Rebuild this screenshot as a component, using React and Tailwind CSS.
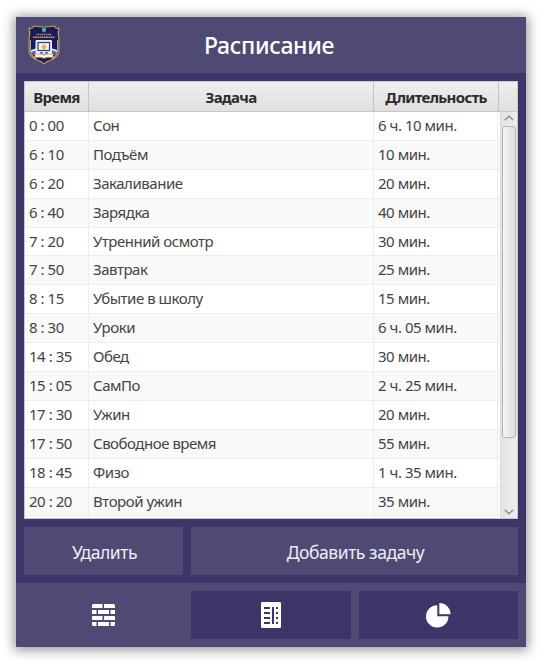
const rows = [
  ['0 : 00', 'Сон', '6 ч. 10 мин.'],
  ['6 : 10', 'Подъём', '10 мин.'],
  ['6 : 20', 'Закаливание', '20 мин.'],
  ['6 : 40', 'Зарядка', '40 мин.'],
  ['7 : 20', 'Утренний осмотр', '30 мин.'],
  ['7 : 50', 'Завтрак', '25 мин.'],
  ['8 : 15', 'Убытие в школу', '15 мин.'],
  ['8 : 30', 'Уроки', '6 ч. 05 мин.'],
  ['14 : 35', 'Обед', '30 мин.'],
  ['15 : 05', 'СамПо', '2 ч. 25 мин.'],
  ['17 : 30', 'Ужин', '20 мин.'],
  ['17 : 50', 'Свободное время', '55 мин.'],
  ['18 : 45', 'Физо', '1 ч. 35 мин.'],
  ['20 : 20', 'Второй ужин', '35 мин.'],
  ['', '', ''],
];

function Crest() {
  return (
    <svg width="32" height="40" viewBox="0 0 32 40" className="block">
      <path d="M1 3.500Q5 4 5.500 1Q16 3 26.500 1Q27 4 31 3.500Q29.500 8 31 14V27Q29.500 32 23 35Q18 36.500 16 39Q14 36.500 9 35Q2.500 32 1 27V14Q2.500 8 1 3.500Z" fill="#1b1b5c" stroke="#c99b45" strokeWidth="1.1" />
      <path d="M2.300 15V26Q3.500 31 8 33.500M29.700 15V26Q28.500 31 24 33.500" fill="none" stroke="#f1e9dc" strokeWidth="0.8" />
      <path d="M14 3h4v3l-2 1.500L14 6z" fill="#41b49b" />
      <path d="M14 3h4v1.500h-4z" fill="#4e91d8" />
      <path d="M8 9.500h16" stroke="#a78958" strokeWidth="1.300" strokeDasharray="1.500 .5" />
      <path d="M5 12.300h22" stroke="#c6a162" strokeWidth="1.500" strokeDasharray="1.700 .5" />
      <path d="M3 25l5-1.500v2L3.500 28zM29 25l-5-1.500v2l4.500 2.500z" fill="#f3f5fb" />
      <path d="M3 27l5-2v2l-4 2zM29 27l-5-2v2l4 2z" fill="#397bd0" />
      <path d="M4 29l4-2v1.500L6 30zM28 29l-4-2v1.500l2 1.500z" fill="#df4050" />
      <rect x="7.500" y="15" width="16.500" height="14.500" rx="1" fill="#eeeefa" />
      <rect x="10" y="17.500" width="11.500" height="8" fill="#f2f2fa" stroke="#30398d" strokeWidth="1.200" />
      <path d="M13 22l3-3 3 3-1.500 1v1.500h-3V23z" fill="#e4b546" />
      <path d="M12 27.800h3M17 27.800h3" stroke="#30398d" strokeWidth="1.200" />
      <path d="M7 29l7 .3 2 1 2-1 7-.3v3.500q-6-.8-9 .8-3-1.600-9-.8z" fill="#faf5e8" stroke="#c39b51" strokeWidth="0.6" />
    </svg>
  );
}

function BricksIcon() {
  return (
    <svg width="23" height="22" viewBox="0 0 23 22" fill="#fff">
      <path d="M1.500 0H10.500V4H0V1.500Q0 0 1.500 0ZM12 0H21.500Q23 0 23 1.500V4H12Z" />
      <rect y="6" width="4.500" height="4" rx=".6" />
      <rect x="6" y="6" width="11" height="4" rx=".6" />
      <rect x="18.500" y="6" width="4.500" height="4" rx=".6" />
      <rect y="12" width="10.500" height="4" rx=".6" />
      <rect x="12" y="12" width="11" height="4" rx=".6" />
      <path d="M0 18H4.500V22H1.500Q0 22 0 20.500ZM6 18H17V22H6ZM18.500 18H23V20.500Q23 22 21.500 22H18.500Z" />
    </svg>
  );
}

function LedgerIcon() {
  return (
    <svg width="20" height="26" viewBox="0 0 20 26">
      <rect width="20" height="26" rx="1.300" fill="#fff" />
      <path d="M3 5h6v2H3zM3 10h6v2H3zM3 15h6v2H3zM3 20h6v2H3zM11 5h2v17h-2zM15 5h2v2h-2zM15 10h2v2h-2zM15 15h2v2h-2zM15 20h2v2h-2z" fill="#3c3668" />
    </svg>
  );
}

function PieIcon() {
  return (
    <svg width="25" height="25" viewBox="0 0 25 25" fill="#fff">
      <path d="M11.300 2.200V13.300H22.400A11.200 11.200 0 1 1 11.300 2.200Z" />
      <path d="M13.300 0A11.200 11.200 0 0 1 24.500 11.200H13.300Z" />
    </svg>
  );
}

function Chevron({ down = false }) {
  return (
    <svg width="10" height="6" viewBox="0 0 10 6" fill="none" stroke="#8d8d8d" strokeWidth="1.400">
      <path d={down ? 'M.7 .7L5 4.800L9.300 .7' : 'M.7 5.300L5 1.200L9.300 5.300'} />
    </svg>
  );
}

export default function App() {
  return (
    <div className="h-[664px] w-[542px] overflow-hidden bg-white pl-4 pt-[17px] font-['Noto_Sans','Open_Sans',sans-serif]">
      <main className="flex h-[630px] w-[510px] flex-col bg-[#3c3668] shadow-[0_1px_11px_2px_rgba(0,0,0,0.42)]">
        <header className="grid h-14 shrink-0 grid-cols-[48px_1fr_52px] items-center bg-[#4f4a73]">
          <div className="pl-3"><Crest /></div>
          <h1 className="text-center text-[23px] font-medium leading-7 tracking-[-0.35px] text-white">Расписание</h1>
        </header>

        <section className="mx-2 mt-2 flex h-[438px] shrink-0 flex-col overflow-hidden border border-[#c8c8c8] bg-white">
          <div className="grid h-[30px] shrink-0 grid-cols-[64px_285px_125px_1fr] border-b border-[#c8c8c8] bg-linear-to-b from-[#efefef] to-[#dfdfdf] text-center text-[15px] font-bold leading-[30px] text-[#2c2c2c]">
            <div className="border-r border-[#c5c5c5]"><span className="tracking-[-0.65px]">Время</span></div>
            <div className="border-r border-[#c5c5c5]"><span className="tracking-[-0.65px]">Задача</span></div>
            <div className="border-r border-[#c5c5c5]"><span className="tracking-[-0.65px]">Длительность</span></div>
            <div />
          </div>
          <div className="flex min-h-0 flex-1">
            <div className="min-w-0 flex-1 overflow-hidden">
              {rows.map((row, i) => (
                <div key={i} className="grid h-[28.9px] grid-cols-[64px_285px_1fr] border-b border-[#ededed] text-[15px] leading-[27px] tracking-[-0.47px] text-[#444] odd:bg-white even:bg-[#f9f9f9]">
                  <div className="whitespace-nowrap border-r border-[#ededed] pl-1">{row[0]}</div>
                  <div className="border-r border-[#ededed] pl-1">{row[1]}</div>
                  <div className="mr-0.5 border-r border-[#ededed] pl-1">{row[2]}</div>
                </div>
              ))}
            </div>
            <div className="flex w-[17px] flex-col items-center border-l border-[#dcdcdc] bg-linear-to-r from-[#e3e3e3] to-[#eeeeee]">
              <div className="flex h-3.5 shrink-0 items-start pt-[3px]"><Chevron /></div>
              <div className="h-[312px] w-3.5 shrink-0 rounded-[3px] border border-[#b5b5b5] bg-linear-to-r from-[#f5f5f5] to-[#dedede]" />
              <div className="mt-auto flex h-3 items-center"><Chevron down /></div>
            </div>
          </div>
        </section>

        <div className="mx-2 mt-2 grid h-12 shrink-0 grid-cols-[159px_1fr] gap-2 text-[17.5px] text-[#eeedf4]">
          <button className="bg-[#4f4a73] pl-0.5 pt-0.5"><span className="tracking-[-0.43px]">Удалить</span></button>
          <button className="bg-[#4f4a73] pl-0.5 pt-0.5"><span className="tracking-[-0.43px]">Добавить задачу</span></button>
        </div>

        <nav className="mt-2 grid h-16 shrink-0 grid-cols-[159px_160px_159px] gap-2 bg-[#4f4a73] p-2">
          <button className="flex items-center justify-center"><BricksIcon /></button>
          <button className="flex items-center justify-center bg-[#3c3668]"><LedgerIcon /></button>
          <button className="flex items-center justify-center bg-[#3c3668]"><PieIcon /></button>
        </nav>
      </main>
    </div>
  );
}
